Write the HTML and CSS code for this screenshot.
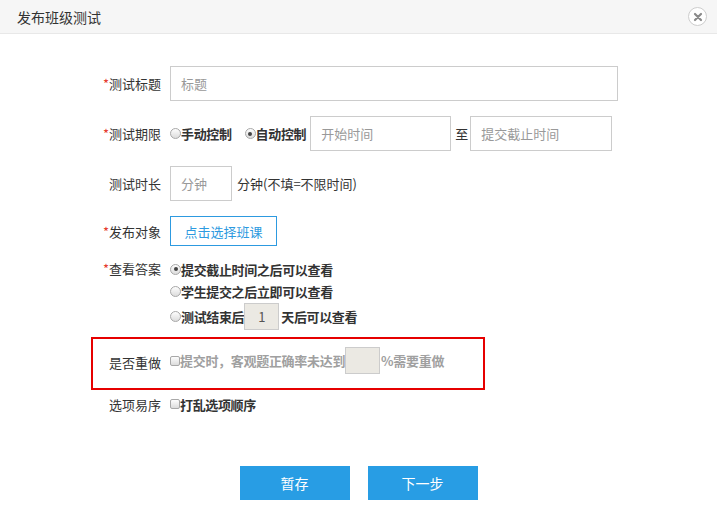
FILE: index.html
```html
<!DOCTYPE html>
<html lang="zh">
<head>
<meta charset="utf-8">
<title>发布班级测试</title>
<link rel="stylesheet" href="styles.css">
</head>
<body>
<div class="dialog">
  <div class="header">
    <span class="title">发布班级测试</span>
    <span class="close">
      <svg width="10" height="10" viewBox="0 0 10 10"><path d="M2 2 L8 8 M8 2 L2 8" stroke="#8a8a8a" stroke-width="2.2" stroke-linecap="round"/></svg>
    </span>
  </div>
  <div class="form">
    <div class="row">
      <label class="lbl"><span class="req">*</span>测试标题</label>
      <input class="txt w-title" type="text" placeholder="标题">
    </div>
    <div class="row">
      <label class="lbl"><span class="req">*</span>测试期限</label>
      <span class="radio"></span><span class="opt mr">手动控制</span>
      <span class="radio on"></span><span class="opt">自动控制</span>
      <input class="txt w-start" type="text" placeholder="开始时间">
      <span class="to">至</span>
      <input class="txt w-end" type="text" placeholder="提交截止时间">
    </div>
    <div class="row">
      <label class="lbl">测试时长</label>
      <input class="txt w-min" type="text" placeholder="分钟">
      <span class="plain">分钟(不填=不限时间)</span>
    </div>
    <div class="row row-btn">
      <label class="lbl"><span class="req">*</span>发布对象</label>
      <button class="pick">点击选择班课</button>
    </div>
    <div class="row row-top">
      <label class="lbl lbl-line"><span class="req">*</span>查看答案</label>
      <div class="opts">
        <div class="line"><span class="radio on"></span><span class="opt">提交截止时间之后可以查看</span></div>
        <div class="line"><span class="radio"></span><span class="opt">学生提交之后立即可以查看</span></div>
        <div class="line line-in"><span class="radio"></span><span class="opt">测试结束后</span><span class="num">1</span><span class="opt">天后可以查看</span></div>
      </div>
    </div>
    <div class="row redo">
      <label class="lbl">是否重做</label>
      <span class="check"></span><span class="opt dim">提交时，客观题正确率未达到</span><span class="num pct"></span><span class="opt dim">%需要重做</span>
    </div>
    <div class="row row-line">
      <label class="lbl">选项易序</label>
      <span class="check"></span><span class="opt">打乱选项顺序</span>
    </div>
  </div>
  <div class="actions">
    <button class="btn">暂存</button>
    <button class="btn">下一步</button>
  </div>
</div>
</body>
</html>
```
FILE: styles.css
```css
* { box-sizing: border-box; }
html, body { margin: 0; padding: 0; background: #fff; }
body {
  font-family: "Microsoft YaHei", "Noto Sans CJK SC", "Liberation Sans", sans-serif;
  font-size: 13px;
  color: #333;
  width: 717px;
  height: 527px;
  overflow: hidden;
}
.header {
  height: 34px;
  background: #f6f6f6;
  border-bottom: 1px solid #e8e8e8;
  display: flex;
  align-items: center;
  justify-content: space-between;
  padding: 0 10px 0 17px;
}
.title { font-size: 14px; color: #333; }
.close {
  width: 19px; height: 19px;
  border: 1px solid #cdcdcd;
  border-radius: 50%;
  display: flex; align-items: center; justify-content: center;
  background: #fff;
}
.form { padding: 32px 0 0 91px; }
.row {
  display: flex;
  align-items: center;
  min-height: 35px;
  margin-bottom: 15px;
  border: 2px solid transparent;
  border-width: 0 2px;
}
.lbl {
  width: 68px;
  text-align: right;
  margin-right: 9px;
  color: #333;
  flex: none;
}
.req { color: #e53a2e; }
.txt {
  height: 35px;
  border: 1px solid #ccc;
  padding: 0 10px;
  font: inherit;
  font-size: 13px;
  color: #333;
  outline: none;
}
.txt::placeholder { color: #999; }
.w-title { width: 448px; }
.w-start { width: 141px; margin-left: 4px; }
.w-end { width: 142px; }
.w-min { width: 62px; }
.to { margin: 0 2px 0 4px; }
.plain { margin-left: 5px; }
.radio {
  width: 11px; height: 11px;
  border-radius: 50%;
  border: 1px solid #a8a8a8;
  background: linear-gradient(#fdfdfd, #dcdcdc);
  flex: none;
  position: relative;
}
.radio.on::after {
  content: "";
  position: absolute;
  left: 2.5px; top: 2.5px;
  width: 4px; height: 4px;
  border-radius: 50%;
  background: #444;
}
.check {
  width: 10px; height: 10px;
  border: 1px solid #a8a8a8;
  border-radius: 2px;
  background: linear-gradient(#fdfdfd, #dcdcdc);
  flex: none;
}
.opt { font-weight: bold; color: #333; letter-spacing: -0.35px; }
.opt.mr { margin-right: 13px; }
.dim { color: #a0a0a0; letter-spacing: -0.3px; }
.row-btn { min-height: 30px; margin-bottom: 12px; }
.pick {
  width: 107px; height: 30px;
  border: 1px solid #2d9ae0;
  background: #fff;
  color: #2d9ae0;
  font: inherit;
  font-size: 13px;
  padding: 0;
}
.row-top { align-items: flex-start; margin-bottom: 7px; }
.lbl-line { line-height: 22px; }
.opts { display: flex; flex-direction: column; }
.line { display: flex; align-items: center; height: 22px; }
.line-in { height: 27px; margin-top: 1px; }
.num {
  width: 35px; height: 27px;
  background: #ebe9e3;
  border: 1px solid #ccc;
  display: flex; align-items: center; justify-content: center;
  color: #555;
  margin-right: 2px;
}
.pct { margin-right: 1px; }
.redo {
  width: 394px;
  margin-left: 0;
  border: 2px solid #e60000;
  padding: 8px 0 14px;
  min-height: 0;
  margin-bottom: 3px;
}
.redo .lbl { margin-top: 3px; }
.row-line { min-height: 22px; }
.actions {
  display: flex;
  justify-content: center;
  gap: 18px;
  margin-top: 51px;
}
.btn {
  width: 110px; height: 34px;
  background: #289de4;
  color: #fff;
  border: 0;
  font: inherit;
  font-size: 14px;
  padding: 0;
}
```
